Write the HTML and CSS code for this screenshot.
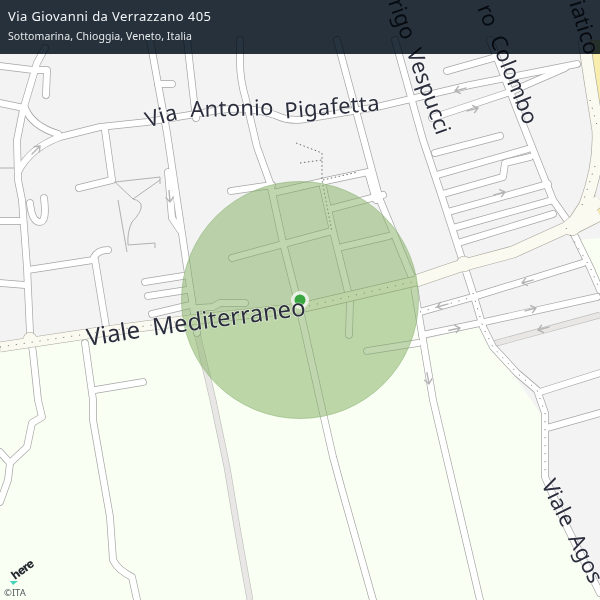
FILE: index.html
```html
<!DOCTYPE html>
<html lang="it">
<head>
<meta charset="utf-8">
<title>Via Giovanni da Verrazzano 405</title>
<link rel="stylesheet" href="styles.css">
</head>
<body>
<main class="stage">
<svg class="map" viewBox="0 0 600 600" width="600" height="600" xmlns="http://www.w3.org/2000/svg">
  <defs>
    <g id="roads">
      <path d="M0 66L33 70H47L46 95"/>
      <path d="M45 48L37 63L23 110L17 140L18 180L22 200L27 267L30 333L33 353L38 400L42 417L32 423L27 447L10 463L0 452"/>
      <path d="M10 463L8 480L0 502"/>
      <path d="M0 103L24 108"/>
      <path d="M25 108Q32 126 58 134"/>
      <path d="M18 172Q30 148 60 137L100 127L147 122L220 110Q250 106 275 115Q290 122 305 119L377 107L470 85L577 64"/>
      <path d="M432 118L510 92L565 68"/>
      <path d="M105 130L112 180L79 188"/>
      <path d="M150 40L167 133L177 200L187 267L197 333"/>
      <path d="M158 84H172"/>
      <path d="M187 40L193 93L196 118"/>
      <path d="M240 40V62Q240 80 246 100L257 147L270 183L283 243L300 310L320 400L333 457L342 490L373 600"/>
      <path d="M231 191L272 185"/>
      <path d="M273 193L330 180L368 172L376 200"/>
      <path d="M232 258L332 231"/>
      <path d="M323 187L333 231L350 300L349 335"/>
      <path d="M342 247L389 236"/>
      <path d="M330 209L383 195"/>
      <path d="M337 40L380 200L413 280L423 340L433 400L480 600"/>
      <path d="M367 351L418 343"/>
      <path d="M145 282L183 276"/>
      <path d="M148 296L187 290"/>
      <path d="M152 314L190 305"/>
      <path d="M197 308L213 307L220 303H245"/>
      <path d="M28 270L93 260Q96 250 108 250"/>
      <path d="M95 260L107 333"/>
      <path d="M0 221H20"/>
      <path d="M0 283L25 285"/>
      <path d="M30 203Q32 222 40 222Q47 222 44 198"/>
      <path d="M85 343L93 400V420L110 517L113 560Q118 570 132 577L137 600"/>
      <path d="M95 390L143 382"/>
      <path d="M395 40L423 140L443 200L463 262L473 293L483 327L493 347L517 373L537 390L545 413V477L567 527L600 593"/>
      <path d="M490 40L520 117L553 200L567 220L590 267L600 290"/>
      <path d="M447 71L493 58"/>
      <path d="M500 136L435 153"/>
      <path d="M437 175L528 149"/>
      <path d="M443 194L503 177L505 163L530 157"/>
      <path d="M448 212L548 184"/>
      <path d="M453 228L553 200"/>
      <path d="M458 243L553 214"/>
      <path d="M420 312L473 297L583 263"/>
      <path d="M422 335L480 323L597 297"/>
      <path d="M540 392L600 373"/>
      <path d="M547 428L600 413"/>
      <path d="M168 172L172 218L180 230"/>
    </g>
    <g id="arrow-left"><path d="M0 0H12M5 -4L0 0L5 4"/></g>
    <g id="arrow-right"><path d="M0 0H-12M-5 -4L0 0L-5 4"/></g>
  </defs>

  <rect class="land" width="600" height="600"/>
  <path class="park" d="M0 350L300 312L413 287L424 340L480 325L493 345L545 420V477L600 600H0Z"/>
  <path class="park" d="M600 238L578 240L600 285Z"/>
  <path class="sand" d="M588 40H600V105Z"/>
  <path class="sand" d="M592 218L600 205V220Z"/>

  <path class="track" d="M0 168L17 168"/>
  <path class="track" d="M115 182L160 177L160 184M115 182L133 199L160 180M118 200L127 252M133 199Q150 203 132 222Q127 232 128 245L155 243L155 248"/>

  <path class="path-casing" d="M197 333L213 400L227 467L237 527L250 600"/>
  <path class="path-fill" d="M197 333L213 400L227 467L237 527L250 600"/>
  <path class="path-casing" d="M493 344L600 315"/>
  <path class="path-fill" d="M493 344L600 315"/>

  <use href="#roads" class="casing"/>
  <use href="#roads" class="fill"/>

  <path class="main-casing" d="M0 347L100 332L190 320L300 308L416 281"/>
  <path class="wide-casing" d="M416 281L457 267L513 252L566 228L600 200M584 40L590 80L598 130Q600 165 585 205L570 228M570 230L600 215"/>
  <circle class="node-casing" cx="30" cy="339" r="7"/>
  <circle class="node-casing" cx="464" cy="264" r="8"/>
  <circle class="node-casing" cx="572" cy="227" r="9"/>
  <path class="main-fill" d="M0 347L100 332L190 320L300 308L416 281"/>
  <path class="wide-fill" d="M416 281L457 267L513 252L566 228L600 200M584 40L590 80L598 130Q600 165 585 205L570 228M570 230L600 215"/>
  <circle class="node-fill" cx="30" cy="339" r="6.4"/>
  <circle class="node-fill" cx="464" cy="264" r="7.4"/>
  <circle class="node-fill" cx="572" cy="227" r="8.4"/>
  <path class="dots" d="M0 347L100 332L190 320L300 308L416 281M582 205L597 160M590 100L597 125"/>
  <path class="dots" d="M420 312L473 297M473 293L483 327L493 347L517 373L537 390L545 413V477M566 228L590 267L600 290"/>

  <use href="#arrow-left" class="arrow" transform="translate(437 307) rotate(-15)"/>
  <use href="#arrow-left" class="arrow" transform="translate(522 283) rotate(-15)"/>
  <use href="#arrow-left" class="arrow" transform="translate(538 330) rotate(-15)"/>
  <use href="#arrow-left" class="arrow" transform="translate(455 91) rotate(-15)"/>
  <use href="#arrow-right" class="arrow" transform="translate(478 108) rotate(-15)"/>
  <use href="#arrow-right" class="arrow" transform="translate(460 328) rotate(-12)"/>
  <use href="#arrow-right" class="arrow" transform="translate(536 308) rotate(-15)"/>
  <use href="#arrow-right" class="arrow" transform="translate(505 192) rotate(-15)"/>
  <use href="#arrow-left" class="arrow" transform="translate(429 384) rotate(-100)"/>
  <use href="#arrow-left" class="arrow" transform="translate(170 202) rotate(-95)"/>
  <use href="#arrow-right" class="arrow" transform="translate(40 146) rotate(-45)"/>

  <path class="footway" d="M296 143L322 153V180L332 232M300 163L322 160M323 180L358 172"/>

  <circle class="radius" cx="300" cy="300" r="118.5"/>
  <circle class="halo" cx="300" cy="300" r="9"/>
  <circle class="dot" cx="300" cy="300" r="5.5"/>

  <path id="line-pigafetta" class="guide" d="M148 128C165 122 178 119 192 117L272 115Q280 120 290 118L385 110"/>
  <path id="line-viale" class="guide" d="M88 346L157 335L310 315"/>
  <text class="label label-wide"><textPath href="#line-pigafetta">Via  Antonio  Pigafetta</textPath></text>
  <text class="label label-lg"><textPath href="#line-viale">Viale  Mediterraneo</textPath></text>
  <text class="label" transform="translate(388 2) rotate(70)">rigo  Vespucci</text>
  <text class="label" transform="translate(477 8) rotate(68)">ro  Colombo</text>
  <text class="label" transform="translate(569 3) rotate(73)">iatico</text>
  <text class="label" transform="translate(541 484) rotate(64)">Viale  Agos</text>

  <path class="here-mark" d="M10 581L18 581L13 585Z"/>
  <text class="here" transform="translate(15 580) rotate(-36)">here</text>
  <text class="copy" x="4" y="596">©ITA</text>
</svg>

<header class="bar">
  <h1 class="title">Via Giovanni da Verrazzano 405</h1>
  <p class="place">Sottomarina, Chioggia, Veneto, Italia</p>
</header>
</main>
</body>
</html>
```

FILE: styles.css
```css
html, body { margin: 0; padding: 0; }
.stage { position: relative; width: 600px; height: 600px; overflow: hidden; background: #f4f3f3; }
.map { position: absolute; inset: 0; display: block; }
.bar {
  position: relative;
  box-sizing: border-box;
  height: 54px;
  padding: 7px 8px 0;
  color: #f2f4f5;
  font-family: "Noto Sans", sans-serif;
}
.bar::before {
  content: "";
  position: absolute;
  inset: 0;
  background: #27333f;
  mix-blend-mode: multiply;
}
.title { position: relative; margin: 0; font-size: 13px; line-height: 18px; font-weight: 400; letter-spacing: 0.4px; }
.place { position: relative; margin: 4px 0 0; font-size: 10.5px; line-height: 14px; letter-spacing: 0.09px; color: #e6e9ea; }

.land { fill: #f4f3f3; }
.park { fill: #f9fff3; }
.sand { fill: #f9edae; }
.track { fill: none; stroke: #a9a9a9; stroke-width: 0.9; }
.casing { fill: none; stroke: #a6a6a6; stroke-width: 7.6; stroke-linecap: round; stroke-linejoin: round; }
.fill { fill: none; stroke: #ffffff; stroke-width: 6.2; stroke-linecap: round; stroke-linejoin: round; }
.path-casing { fill: none; stroke: #bdbdbb; stroke-width: 6.6; }
.path-fill { fill: none; stroke: #e9e7e5; stroke-width: 5.4; }
.main-casing { fill: none; stroke: #a8a79f; stroke-width: 10.6; stroke-linejoin: round; }
.main-fill { fill: none; stroke: #fbfaf0; stroke-width: 9.4; stroke-linejoin: round; }
.wide-casing { fill: none; stroke: #a8a79f; stroke-width: 12.6; stroke-linejoin: round; }
.wide-fill { fill: none; stroke: #fbfaf0; stroke-width: 11.4; stroke-linejoin: round; }
.node-casing { fill: #a8a79f; }
.node-fill { fill: #fbfaf0; }
.dots { fill: none; stroke: #6f6f68; stroke-width: 1; stroke-dasharray: 1 7; }
.arrow { fill: none; stroke: #b4b4b4; stroke-width: 1.4; }
.footway { fill: none; stroke: #6c6c6c; stroke-width: 1; stroke-dasharray: 1.5 2.5; }
.radius { fill: #7fae5e; fill-opacity: 0.5; stroke: #8fb478; stroke-width: 0.6; }
.halo { fill: #ffffff; fill-opacity: 0.7; }
.dot { fill: #3aa63f; }
.guide { fill: none; stroke: none; }
.label {
  font-family: "Noto Sans", sans-serif;
  font-size: 22px;
  fill: #2b2e3c;
  white-space: pre;
  paint-order: stroke;
  stroke: rgba(255, 255, 255, 0.5);
  stroke-width: 1.5px;
}
.label-lg { font-size: 24px; }
.label-wide { letter-spacing: 0.25px; }
.here { font-family: "Inter", sans-serif; font-size: 12px; font-weight: 800; fill: #25282e; letter-spacing: -0.6px; }
.here-mark { fill: #45d3bd; }
.copy { font-family: "Noto Sans", sans-serif; font-size: 9.5px; fill: #555b60; }
```
